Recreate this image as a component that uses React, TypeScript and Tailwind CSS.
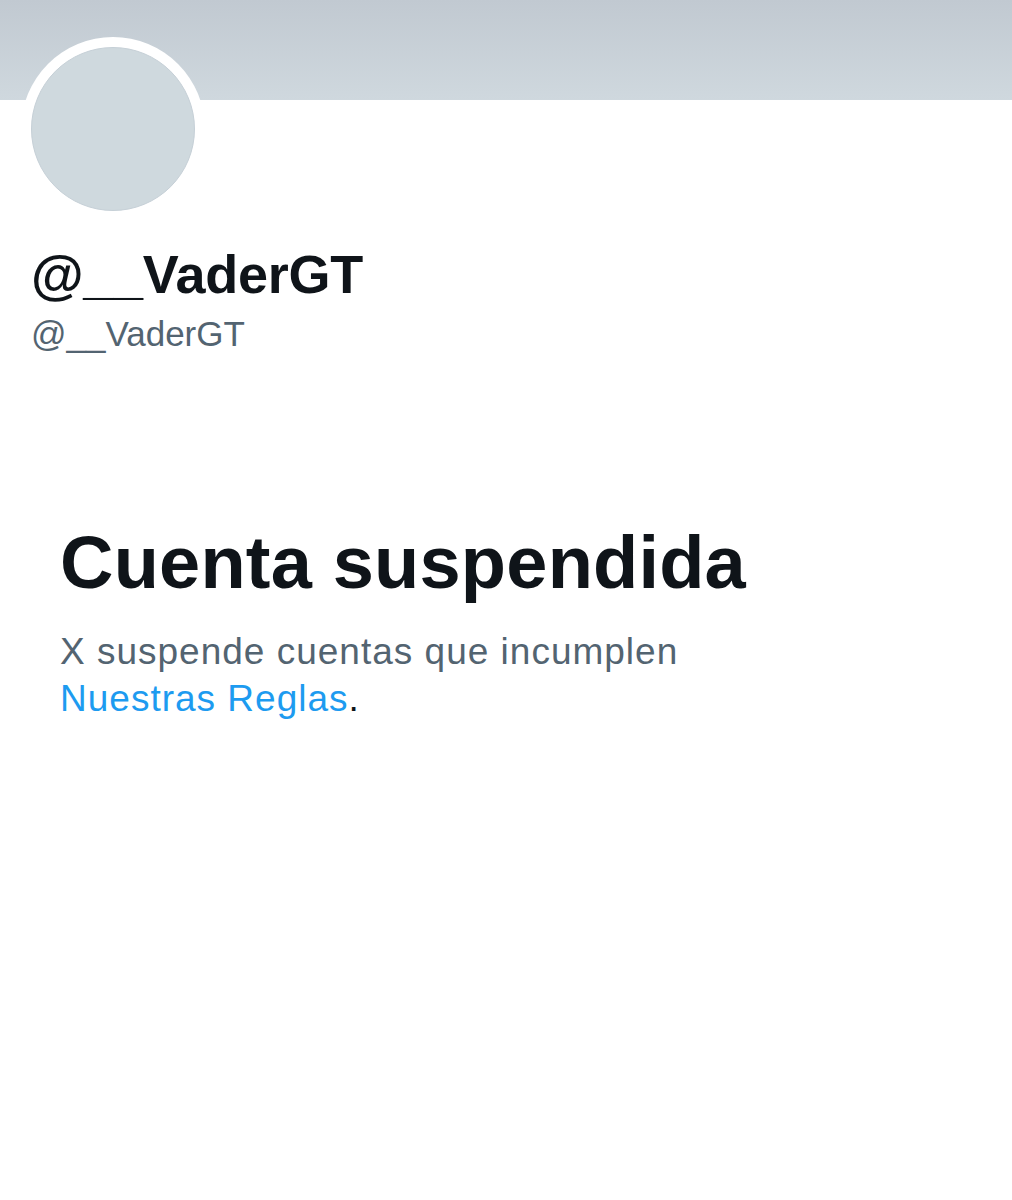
export default function App() {
  return (
    <div className="w-[1012px] min-h-[1200px] bg-white font-['Liberation_Sans',Arial,sans-serif]">
      {/* header banner */}
      <div className="h-[100px] w-full bg-gradient-to-b from-[#c1c9d1] to-[#cfd8de]" />

      {/* avatar sits over the banner edge */}
      <div className="ml-[21px] -mt-[63px] h-[184px] w-[184px] rounded-full bg-white p-[10px]">
        <div className="h-full w-full rounded-full border border-[#c6d0d7] bg-[#cfd9de]" />
      </div>

      <div className="pl-[31px]">
        <h1 className="mt-[21px] text-[54px] leading-[64px] font-bold tracking-[-0.3px] text-[#0f1419]">
          @__VaderGT
        </h1>
        <p className="mt-[6px] text-[35px] leading-[44px] text-[#536471]">@__VaderGT</p>
      </div>

      <div className="pl-[60px] pt-[165px]">
        <h2 className="text-[74px] leading-[84px] font-bold tracking-[0.2px] text-[#0f1419]">
          Cuenta suspendida
        </h2>
        <p className="mt-[23px] text-[37px] leading-[47px] tracking-[1px] text-[#536471]">
          X suspende cuentas que incumplen
          <br />
          <a href="#" className="text-[#1d9bf0]">
            Nuestras Reglas
          </a>
          <span className="text-[#0f1419]">.</span>
        </p>
      </div>
    </div>
  )
}
